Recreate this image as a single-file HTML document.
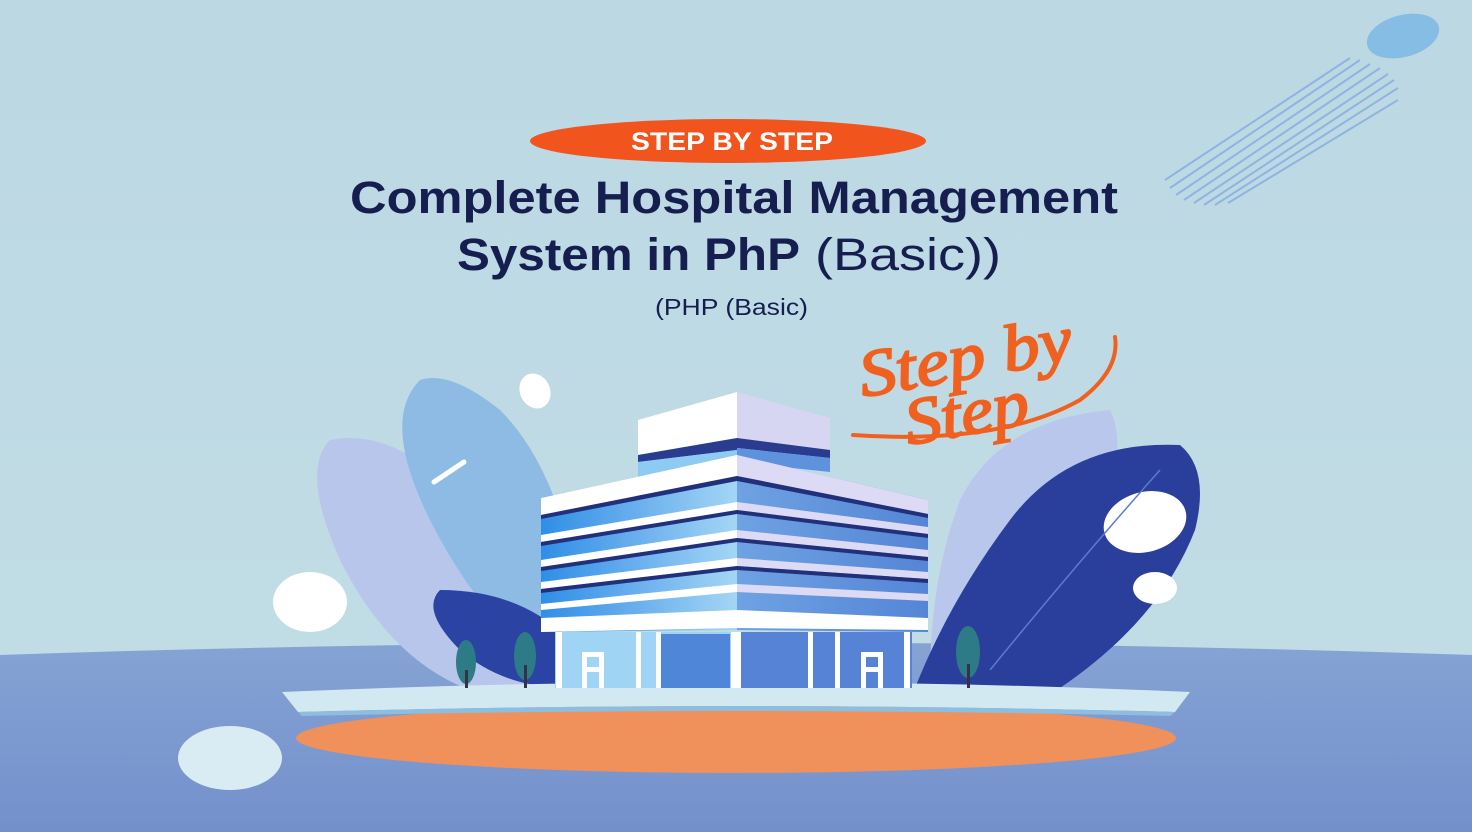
<!DOCTYPE html>
<html><head><meta charset="utf-8"><style>
html,body{margin:0;padding:0;width:1472px;height:832px;overflow:hidden;background:#bdd9e3}
svg{display:block}
</style></head><body>
<svg width="1472" height="832" viewBox="0 0 1472 832" xmlns="http://www.w3.org/2000/svg">
<defs>
<linearGradient id="bg" x1="0" y1="0" x2="0" y2="1"><stop offset="0" stop-color="#bcd8e3"/><stop offset="1" stop-color="#c2dde5"/></linearGradient>
<linearGradient id="gr" x1="0" y1="0" x2="0" y2="1"><stop offset="0" stop-color="#86a3d4"/><stop offset="1" stop-color="#7390cc"/></linearGradient>
<linearGradient id="lf" x1="0" y1="0" x2="1" y2="0"><stop offset="0" stop-color="#2f8ee6"/><stop offset="0.5" stop-color="#6bb0ee"/><stop offset="1" stop-color="#a4d6f4"/></linearGradient>
<linearGradient id="rf" x1="0" y1="0" x2="1" y2="0"><stop offset="0" stop-color="#6ea2e2"/><stop offset="1" stop-color="#5585d6"/></linearGradient>
</defs>
<rect width="1472" height="832" fill="url(#bg)"/>
<path d="M0 655 Q736 630 1472 655 L1472 832 L0 832Z" fill="url(#gr)"/>
<ellipse cx="1403" cy="36" rx="37" ry="21" fill="#86bde4" transform="rotate(-15 1403 36)"/>
<g stroke="#8fb4e0" stroke-width="2">
<line x1="1170" y1="188" x2="1360" y2="60"/><line x1="1176" y1="195" x2="1370" y2="64"/><line x1="1184" y1="200" x2="1380" y2="68"/><line x1="1194" y1="203" x2="1388" y2="74"/><line x1="1204" y1="205" x2="1394" y2="80"/><line x1="1165" y1="180" x2="1350" y2="58"/><line x1="1215" y1="205" x2="1398" y2="88"/><line x1="1228" y1="203" x2="1398" y2="100"/>
</g>
<path d="M330 440 Q300 470 340 560 Q390 660 470 690 L560 690 Q520 560 430 470 Q380 430 330 440Z" fill="#b8c6ec"/>
<path d="M420 380 Q380 420 430 520 Q480 620 560 680 L580 600 Q560 470 500 410 Q450 370 420 380Z" fill="#8dbbe4"/>
<path d="M440 590 Q420 610 460 650 Q500 685 560 688 L570 640 Q520 590 440 590Z" fill="#2b43a2"/>
<path d="M434 482 L464 462" stroke="#fff" stroke-width="5" stroke-linecap="round"/>
<ellipse cx="535" cy="391" rx="15" ry="18" fill="#fff" transform="rotate(-25 535 391)"/>
<ellipse cx="310" cy="602" rx="37" ry="30" fill="#fff"/>
<ellipse cx="230" cy="758" rx="52" ry="32" fill="#d9ecf3"/>
<path d="M1110 410 Q1000 420 960 500 Q930 580 930 680 L1000 680 Q1080 580 1110 500 Q1125 440 1110 410Z" fill="#b9c7ec"/>
<path d="M1180 445 Q1070 440 1010 520 Q950 600 915 688 L1060 688 Q1160 620 1195 530 Q1210 470 1180 445Z" fill="#2a3f9c"/>
<ellipse cx="1145" cy="522" rx="42" ry="30" fill="#fff" transform="rotate(-15 1145 522)"/>
<ellipse cx="1155" cy="588" rx="22" ry="16" fill="#fff"/>
<path d="M990 670 Q1080 560 1160 470" stroke="#5b7ccc" stroke-width="1.5" fill="none"/>
<ellipse cx="736" cy="738" rx="440" ry="35" fill="#f0905a"/>
<path d="M282 692 Q736 672 1190 692 L1175 712 Q736 700 298 712Z" fill="#d3e9f2"/>
<path d="M298 712 Q736 700 1175 712 L1170 716 Q736 706 302 716Z" fill="#8cbee0"/>
<g><ellipse cx="466" cy="662" rx="10" ry="22" fill="#2d7b86"/><rect x="465" y="670" width="3" height="18" fill="#334"/>
<ellipse cx="525" cy="656" rx="11" ry="24" fill="#2d7b86"/><rect x="524" y="665" width="3" height="23" fill="#334"/>
<ellipse cx="968" cy="652" rx="12" ry="26" fill="#2d7b86"/><rect x="967" y="664" width="3" height="24" fill="#334"/></g>
<polygon points="638,420 737,392 737,438 638,455" fill="#fff"/>
<polygon points="737,392 830,418 830,450 737,438" fill="#d6d5f2"/>
<polygon points="638,455 737,438 737,450 638,462" fill="#2a3c90"/>
<polygon points="737,438 830,450 830,458 737,448" fill="#2a3c90"/>
<polygon points="638,462 737,450 737,470 638,478" fill="#8ecbf2"/>
<polygon points="737,448 830,458 830,472 737,462" fill="#5f92dc"/>
<polygon points="541,498 737,455 737,630 541,632" fill="url(#lf)"/>
<polygon points="737,455 928,500 928,632 737,630" fill="url(#rf)"/>
<polygon points="541,498 737,455 737,476 541,515" fill="#fff"/>
<polygon points="737,455 928,500 928,514 737,476" fill="#dcdaf4"/>
<g fill="#fff">
<polygon points="541,535 737,502 737,510 541,542"/>
<polygon points="541,560 737,530 737,538 541,567"/>
<polygon points="541,582 737,558 737,566 541,589"/>
<polygon points="541,604 737,584 737,592 541,610"/>
</g>
<g fill="#dcdaf4">
<polygon points="737,502 928,527 928,534 737,510"/>
<polygon points="737,530 928,550 928,557 737,538"/>
<polygon points="737,558 928,572 928,579 737,566"/>
<polygon points="737,584 928,594 928,601 737,592"/>
</g>
<g fill="#22307c">
<polygon points="541,515 737,476 737,481 541,519"/>
<polygon points="541,542 737,510 737,514 541,546"/>
<polygon points="541,567 737,538 737,542 541,571"/>
<polygon points="541,589 737,566 737,570 541,593"/>
<polygon points="737,476 928,514 928,518 737,481"/>
<polygon points="737,510 928,534 928,538 737,514"/>
<polygon points="737,538 928,557 928,561 737,542"/>
<polygon points="737,566 928,579 928,583 737,570"/>
</g>
<polygon points="541,618 737,610 928,618 928,630 737,628 541,632" fill="#fff"/>
<rect x="555" y="632" width="182" height="56" fill="#9fd4f4"/>
<rect x="737" y="632" width="175" height="56" fill="#5683d6"/>
<rect x="660" y="634" width="70" height="54" fill="#4f86d8"/>
<g fill="#fff"><rect x="556" y="632" width="6" height="56"/><rect x="636" y="632" width="5" height="56"/><rect x="656" y="632" width="5" height="56"/><rect x="731" y="632" width="10" height="56"/><rect x="808" y="632" width="5" height="56"/><rect x="835" y="632" width="5" height="56"/><rect x="904" y="632" width="6" height="56"/>
<rect x="582" y="652" width="22" height="36"/><rect x="861" y="652" width="22" height="36"/></g>
<rect x="587" y="657" width="12" height="10" fill="#9fd4f4"/><rect x="866" y="657" width="12" height="10" fill="#5683d6"/>
<rect x="587" y="672" width="12" height="16" fill="#9fd4f4"/><rect x="866" y="672" width="12" height="16" fill="#5683d6"/>
<ellipse cx="728" cy="141" rx="198" ry="22" fill="#f2541e"/>
<text x="631" y="150" textLength="202" lengthAdjust="spacingAndGlyphs" font-family="Liberation Sans, sans-serif" font-weight="700" font-size="25" fill="#fff">STEP BY STEP</text>
<text x="350" y="213" textLength="768" lengthAdjust="spacingAndGlyphs" font-family="Liberation Sans, sans-serif" font-weight="700" font-size="45" fill="#161d4f">Complete Hospital Management</text>
<text x="457" y="270" textLength="343" lengthAdjust="spacingAndGlyphs" font-family="Liberation Sans, sans-serif" font-weight="700" font-size="45" fill="#161d4f">System in PhP</text>
<text x="815" y="270" textLength="186" lengthAdjust="spacingAndGlyphs" font-family="Liberation Sans, sans-serif" font-size="45" fill="#161d4f">(Basic))</text>
<text x="655" y="315" textLength="153" lengthAdjust="spacingAndGlyphs" font-family="Liberation Sans, sans-serif" font-size="23" fill="#161d4f">(PHP (Basic)</text>
<g fill="#f0601e" stroke="#f0601e" stroke-width="2" font-family="Liberation Serif, serif" font-style="italic" font-size="66">
<text x="858" y="380" textLength="215" lengthAdjust="spacingAndGlyphs" transform="rotate(-10 958 360)">Step by</text>
<text x="905" y="436" textLength="125" lengthAdjust="spacingAndGlyphs" transform="rotate(-10 958 420)">Step</text>
</g>
<path d="M853 435 Q1000 445 1080 400 Q1120 370 1115 337" stroke="#f0601e" stroke-width="4" fill="none" stroke-linecap="round"/>
</svg>
</body></html>
